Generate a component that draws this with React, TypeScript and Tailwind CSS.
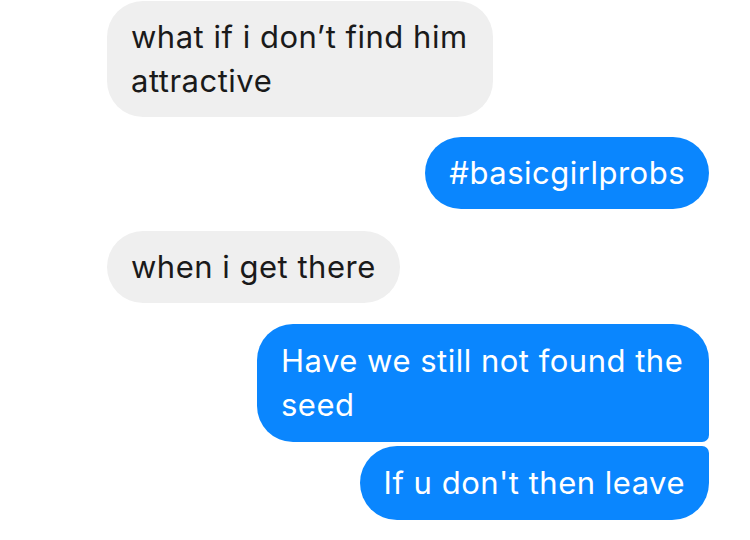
const Bubble = ({ text, mine, className }: { text: string; mine?: boolean; className?: string }) => (
  <div
    className={`px-6 text-[31px] leading-[44px] tracking-[0.5px] ${
      mine ? "self-end bg-[#0a86fe] text-white" : "self-start bg-[#efefef] text-[#1a1a1a]"
    } ${className ?? ""}`}
  >
    {text}
  </div>
);

export default function App() {
  return (
    <div
      className="flex h-[540px] w-[750px] flex-col overflow-hidden bg-white pl-[107px] pr-[41px]"
      style={{ fontFamily: 'Inter, "Liberation Sans", Arial, sans-serif' }}
    >
      <Bubble text="what if i don’t find him attractive" className="mt-[1px] w-[386px] rounded-[36px] py-[14px]" />
      <Bubble text="#basicgirlprobs" mine className="mt-[20px] rounded-[37px] py-[14px]" />
      <Bubble text="when i get there" className="mt-[22px] rounded-[37px] py-[14px]" />
      <Bubble
        text="Have we still not found the seed"
        mine
        className="mt-[21px] w-[452px] rounded-[36px] rounded-br-[7px] py-[15px]"
      />
      <Bubble text="If u don't then leave" mine className="mt-[4px] rounded-[37px] rounded-tr-[7px] py-[15px]" />
    </div>
  );
}
